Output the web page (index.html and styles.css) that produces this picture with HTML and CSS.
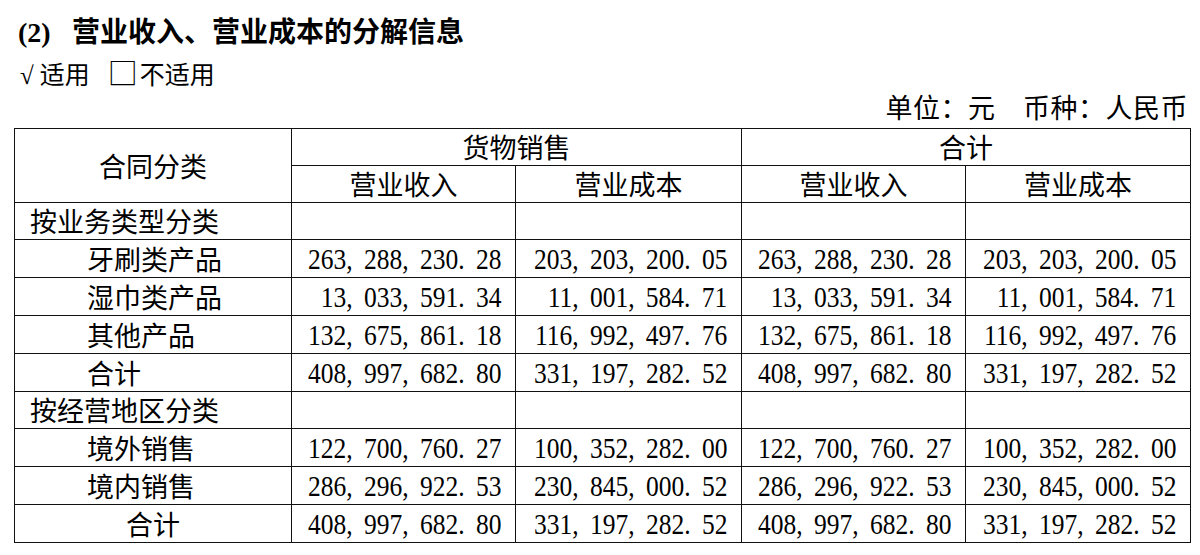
FILE: index.html
```html
<!DOCTYPE html>
<html lang="zh-CN">
<head>
<meta charset="utf-8">
<title>营业收入、营业成本的分解信息</title>
<link rel="stylesheet" href="styles.css">
</head>
<body>
<div class="page">
  <h2 class="title"><span class="num">(2)</span>营业收入、营业成本的分解信息</h2>
  <div class="apply"><span class="check">√</span>适用<span class="box">□</span>不适用</div>
  <div class="unit">单位：元　币种：人民币</div>
  <table class="report">
    <colgroup>
      <col class="c1"><col class="c2"><col class="c3"><col class="c4"><col class="c5">
    </colgroup>
    <tr>
      <td rowspan="2" class="center">合同分类</td>
      <td colspan="2" class="center">货物销售</td>
      <td colspan="2" class="center">合计</td>
    </tr>
    <tr>
      <td class="center">营业收入</td>
      <td class="center">营业成本</td>
      <td class="center">营业收入</td>
      <td class="center">营业成本</td>
    </tr>
    <tr>
      <td class="cat">按业务类型分类</td><td></td><td></td><td></td><td></td>
    </tr>
    <tr>
      <td class="sub">牙刷类产品</td>
      <td class="n"><span>263, 288, 230. 28</span></td>
      <td class="n"><span>203, 203, 200. 05</span></td>
      <td class="n"><span>263, 288, 230. 28</span></td>
      <td class="n"><span>203, 203, 200. 05</span></td>
    </tr>
    <tr>
      <td class="sub">湿巾类产品</td>
      <td class="n"><span>13, 033, 591. 34</span></td>
      <td class="n"><span>11, 001, 584. 71</span></td>
      <td class="n"><span>13, 033, 591. 34</span></td>
      <td class="n"><span>11, 001, 584. 71</span></td>
    </tr>
    <tr>
      <td class="sub">其他产品</td>
      <td class="n"><span>132, 675, 861. 18</span></td>
      <td class="n"><span>116, 992, 497. 76</span></td>
      <td class="n"><span>132, 675, 861. 18</span></td>
      <td class="n"><span>116, 992, 497. 76</span></td>
    </tr>
    <tr>
      <td class="sub">合计</td>
      <td class="n"><span>408, 997, 682. 80</span></td>
      <td class="n"><span>331, 197, 282. 52</span></td>
      <td class="n"><span>408, 997, 682. 80</span></td>
      <td class="n"><span>331, 197, 282. 52</span></td>
    </tr>
    <tr>
      <td class="cat">按经营地区分类</td><td></td><td></td><td></td><td></td>
    </tr>
    <tr>
      <td class="sub">境外销售</td>
      <td class="n"><span>122, 700, 760. 27</span></td>
      <td class="n"><span>100, 352, 282. 00</span></td>
      <td class="n"><span>122, 700, 760. 27</span></td>
      <td class="n"><span>100, 352, 282. 00</span></td>
    </tr>
    <tr>
      <td class="sub">境内销售</td>
      <td class="n"><span>286, 296, 922. 53</span></td>
      <td class="n"><span>230, 845, 000. 52</span></td>
      <td class="n"><span>286, 296, 922. 53</span></td>
      <td class="n"><span>230, 845, 000. 52</span></td>
    </tr>
    <tr>
      <td class="center">合计</td>
      <td class="n"><span>408, 997, 682. 80</span></td>
      <td class="n"><span>331, 197, 282. 52</span></td>
      <td class="n"><span>408, 997, 682. 80</span></td>
      <td class="n"><span>331, 197, 282. 52</span></td>
    </tr>
  </table>
</div>
</body>
</html>
```

FILE: styles.css
```css
html, body {
  margin: 0;
  padding: 0;
  background: #fff;
  color: #000;
}

body {
  font-family: "Noto Sans CJK SC", "Noto Sans", sans-serif;
}

.page {
  width: 1176px;
  margin-left: 14px;
  padding-top: 10px;
}

.title {
  margin: 0;
  height: 40px;
  line-height: 40px;
  font-size: 28px;
  font-weight: 700;
  padding-left: 4px;
  white-space: nowrap;
}

.title .num {
  font-family: "Liberation Serif", serif;
  font-weight: 700;
  display: inline-block;
  width: 54px;
}

.apply {
  margin-top: 5px;
  height: 36px;
  line-height: 36px;
  font-size: 25px;
  padding-left: 6px;
  white-space: nowrap;
}

.apply .check {
  font-family: "Liberation Serif", serif;
  font-size: 25px;
  margin-right: 6px;
}

.apply .box {
  font-family: "Noto Sans CJK SC", sans-serif;
  font-size: 30px;
  line-height: 30px;
  margin-left: 18px;
  margin-right: 2px;
}

.unit {
  margin-top: 1px;
  height: 30px;
  line-height: 30px;
  font-size: 27px;
  letter-spacing: 0.5px;
  text-align: right;
  padding-right: 2px;
  margin-bottom: 6px;
  white-space: nowrap;
}

.report {
  border-collapse: collapse;
  table-layout: fixed;
  width: 1176px;
  font-size: 27px;
}

.report .c1 { width: 277px; }
.report .c2 { width: 224px; }
.report .c3 { width: 226px; }
.report .c4 { width: 224px; }
.report .c5 { width: 225px; }

.report td {
  border: 1px solid #111;
  height: 36.1px;
  padding: 0;
  line-height: 36px;
  white-space: nowrap;
  vertical-align: middle;
}

.report td.center {
  text-align: center;
}

.report td.cat {
  padding-left: 15px;
}

.report td.sub {
  padding-left: 72px;
}

.report td.n {
  text-align: right;
  padding-right: 14px;
}

.report td.n span {
  display: inline-block;
  margin-left: -60px;
  font-family: "Liberation Serif", serif;
  font-size: 30px;
  word-spacing: 5.8px;
  transform: scaleX(0.85);
  transform-origin: right center;
}
```
